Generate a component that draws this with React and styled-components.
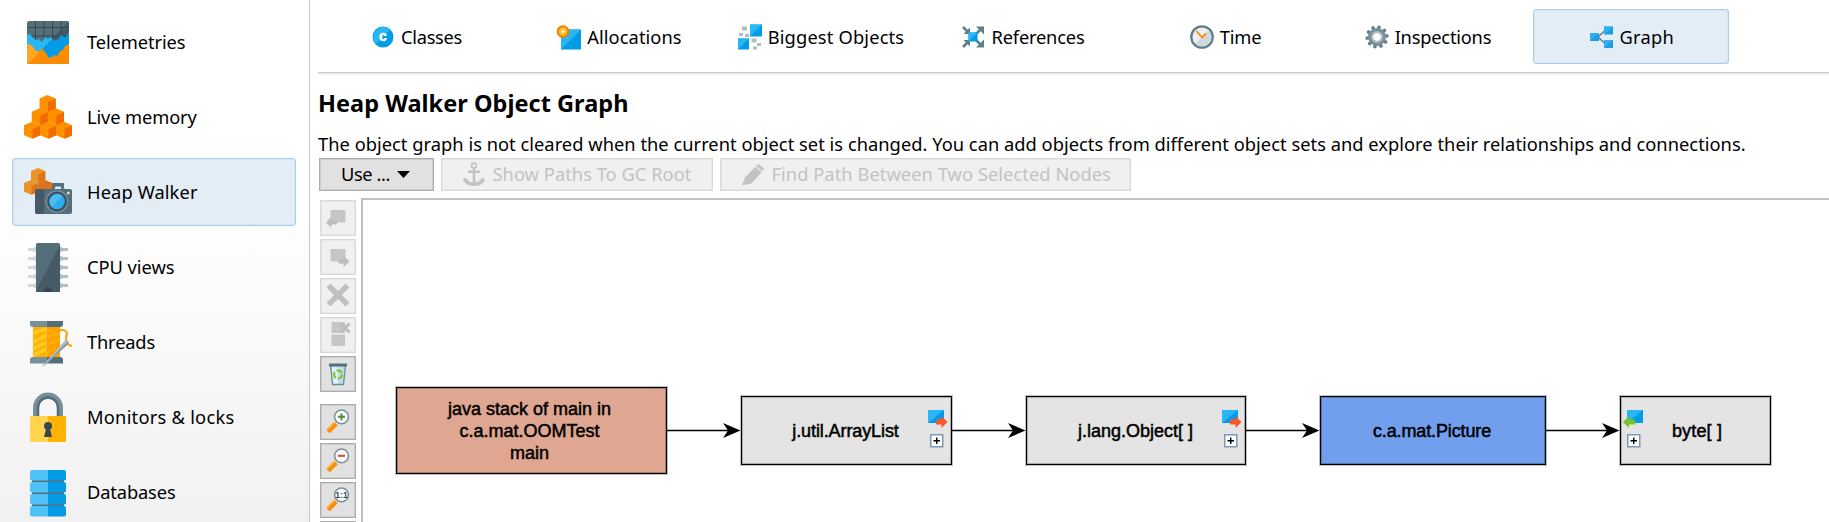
import React from "react";
import styled, { createGlobalStyle, css } from "styled-components";

const GlobalStyle = createGlobalStyle`
  * { box-sizing: border-box; }
  body {
    margin: 0;
    background: #fff;
    color: #000;
    font-family: "Noto Sans", "Open Sans", sans-serif;
    font-size: 18.3px;
    line-height: 24px;
  }
`;

const Window = styled.div`
  display: flex;
  width: 100%;
  height: 522px;
  overflow: hidden;
`;

/* ---------- sidebar ---------- */

const Sidebar = styled.nav`
  flex: 0 0 310px;
  display: flex;
  flex-direction: column;
  gap: 7px;
  padding: 8px 13px 0 12px;
  border-right: 1px solid #c8c8c8;
  background: linear-gradient(#fff 0, #fff 200px, #f1f1f1 522px);
  overflow: hidden;
`;

const selectedBox = css`
  border-color: #a9cee6;
  background: #e3edf6;
  box-shadow: inset 0 0 0 1px #d6e6f2;
`;

const SidebarItem = styled.div`
  flex: 0 0 68px;
  display: flex;
  align-items: center;
  gap: 15px;
  padding-left: 11px;
  border: 1px solid transparent;
  border-radius: 3px;
  ${(p) => p.$selected && selectedBox}
`;

const Label = styled.span`
  white-space: pre;
  letter-spacing: ${(p) => p.$track || 0}px;
`;

/* ---------- main area ---------- */

const Main = styled.main`
  flex: 1;
  min-width: 0;
  display: flex;
  flex-direction: column;
  padding-left: 8px;
`;

const TabBar = styled.div`
  flex: 0 0 75px;
  display: flex;
  gap: 6.33px;
  padding: 9px 0 0 1px;
  border-bottom: 2px solid #f0f0f0;
  box-shadow: inset 0 -1px 0 #c8c8c8;
`;

const Tab = styled.div`
  flex: 0 0 196px;
  height: 55px;
  display: flex;
  align-items: center;
  padding-left: ${(p) => p.$inset}px;
  gap: ${(p) => p.$gap}px;
  border: 1px solid transparent;
  border-radius: 3px;
  ${(p) => p.$selected && selectedBox}
`;

const Title = styled.h1`
  margin: 12px 0 0;
  height: 32px;
  font-size: 23.5px;
  line-height: 32px;
  font-weight: 700;
  letter-spacing: 0.03px;
  white-space: nowrap;
`;

const Description = styled.p`
  margin: 12px 0 0;
  height: 27px;
  line-height: 26px;
  letter-spacing: 0.025px;
  white-space: nowrap;
`;

const ButtonRow = styled.div`
  display: flex;
  gap: 7px;
  padding-left: 1px;
  height: 33px;
`;

const buttonFace = css`
  border: 1px solid ${(p) => (p.$disabled ? "#d9d9d9" : "#adadad")};
  background: ${(p) => (p.$disabled ? "#f0f0f0" : "#e1e1e1")};
  box-shadow: inset 0 0 0 1px ${(p) => (p.$disabled ? "#e6e6e6" : "#cdcdcd")};
  color: ${(p) => (p.$disabled ? "#c3c3c3" : "#000")};
`;

const Button = styled.div`
  display: flex;
  align-items: center;
  width: ${(p) => p.$width}px;
  padding: 0 0 1px 21px;
  gap: ${(p) => p.$gap}px;
  ${buttonFace}
`;

const Workspace = styled.div`
  flex: 1;
  min-height: 0;
  display: flex;
  padding: 7px 0 0 1px;
`;

const ToolColumn = styled.div`
  flex: 0 0 42px;
  display: flex;
  flex-direction: column;
  gap: 3px;
  padding: 2px 0 0 0.5px;
  overflow: hidden;
`;

const ToolButton = styled.div`
  flex: 0 0 36px;
  width: 36px;
  display: flex;
  align-items: center;
  justify-content: center;
  margin-top: ${(p) => (p.$newGroup ? 9 : 0)}px;
  ${buttonFace}
`;

const Canvas = styled.div`
  flex: 1;
  position: relative;
  border: 2px solid #c0c0c0;
  border-width: 2px 0 0 2px;
  overflow: hidden;
`;

const Edges = styled.svg`
  position: absolute;
  inset: 0;
`;

const Node = styled.div`
  position: absolute;
  left: ${(p) => p.$x}px;
  top: ${(p) => p.$y}px;
  width: ${(p) => p.$w}px;
  height: ${(p) => p.$h}px;
  display: flex;
  align-items: center;
  justify-content: center;
  border: 1px solid #000;
  box-shadow: 0 0 0 1px rgba(0, 0, 0, 0.25), inset 0 0 0 1px rgba(0, 0, 0, 0.25);
  background: ${(p) => p.$fill};
  padding-left: ${(p) => p.$padLeft || 0}px;
  padding-right: ${(p) => p.$padRight || 0}px;
  font: 18px/22px "Liberation Sans", Arial, sans-serif;
  -webkit-text-stroke: 0.5px #000;
  letter-spacing: ${(p) => p.$track || 0}px;
  text-align: center;
  white-space: pre-line;
`;

const Handle = styled.svg`
  position: absolute;
  top: 13px;
  ${(p) => (p.$side === "left" ? "left: 2px;" : "right: 3px;")}
`;

/* ---------- sidebar icons ---------- */

const Icon48 = ({ children }) => (
  <svg width="48" height="50" viewBox="0 0 48 50">{children}</svg>
);

const TelemetriesIcon = () => (
  <Icon48>
    <clipPath id="tele"><rect x="3" y="4" width="42" height="43" rx="2" /></clipPath>
    <g clipPath="url(#tele)">
      <rect x="3" y="4" width="42" height="43" fill="#546e7a" />
      <path d="M45 4L3 47H45z" fill="#455a64" />
      <path d="M11.5 4v20M20 4v20M28.5 4v20M37 4v20M3 10.500H45M3 19H45" stroke="#37474f" strokeWidth="1" />
      <path d="M3 18L6 17L9 21L12 23L15 22L18 25L21 20L24 22L27 20L30 24L34 23L37 18L41 21L45 16V47H3z" fill="#29b6f6" />
      <path d="M45 16L41 21L37 18L34 23L30 24L28 22L10 40H45z" fill="#039be5" />
      <path d="M3 28L5 27L8 29L11 33L15 35L18 31L20 34L22 36L24 40L27 41L30 38L33 39L36 34L39 33L41 29L45 27V47H3z" fill="#fb8c00" />
      <path d="M3 28L5 27L8 29L11 33L15 35L16 34L4 47H3z" fill="#ffa726" />
    </g>
  </Icon48>
);

const Cube = ({ x, y, light = "#ff9100", dark = "#ef6c00" }) => (
  <g transform={`translate(${x} ${y})`}>
    <path d="M8 0L16.200 3.500V13.500L8.500 17L0 13.500V3.500z" fill={light} />
    <path d="M16.200 3.800V13.500L8.500 17V7.200z" fill={dark} />
  </g>
);

const LiveMemoryIcon = () => (
  <Icon48>
    {[[0, 29.8], [16, 29.8], [32, 29.8], [7.800, 16.300], [23.800, 16.300], [15.500, 3]].map(([x, y]) => (
      <Cube key={`${x}-${y}`} x={x} y={y} />
    ))}
  </Icon48>
);

const HeapWalkerIcon = () => (
  <Icon48>
    <g transform="translate(0 1) scale(.88)">
      <Cube x={0} y={13.500} light="#ec9326" dark="#d87320" />
      <Cube x={16} y={13.500} light="#d87320" dark="#d87320" />
      <Cube x={8} y={0} light="#ec9326" dark="#d87320" />
    </g>
    <path d="M29 22L30.500 17.500H37.500L39 22" fill="none" stroke="#546e7a" strokeWidth="3" strokeLinejoin="round" />
    <rect x="28" y="16" width="12" height="3.500" rx="1" fill="#546e7a" />
    <rect x="11" y="22" width="37" height="25" rx="2" fill="#546e7a" />
    <path d="M13 22H20V47H13a2 2 0 0 1-2-2V24a2 2 0 0 1 2-2z" fill="#455a64" />
    <circle cx="33" cy="34.500" r="11.300" fill="#78909c" />
    <circle cx="33" cy="34.500" r="10" fill="#37505c" />
    <circle cx="33" cy="34.500" r="7.800" fill="#29aeee" />
    <path d="M27.500 40A7.800 7.800 0 0 1 38.500 29z" fill="#50baf0" />
    <circle cx="44.300" cy="26" r="1.600" fill="#cfd8dc" />
  </Icon48>
);

const CpuIcon = () => (
  <Icon48>
    {[7.500, 16.500, 25.500, 34.500, 43.500].map((y) => (
      <g key={y}>
        <path d={`M12 ${y - 3}L9 ${y - 1.500}H4V${y + 1.500}H9L12 ${y + 3}z`} fill="#cfd8dc" />
        <path d={`M36 ${y - 3}L39 ${y - 1.500}H44V${y + 1.500}H39L36 ${y + 3}z`} fill="#b0bec5" />
      </g>
    ))}
    <rect x="12" y="1" width="24" height="49" rx="1.500" fill="#546e7a" />
    <path d="M36 3L12 48.500Q12 50 13.500 50H34.500Q36 50 36 48.500z" fill="#455a64" />
    <path d="M19.500 50a4.500 4.500 0 0 1 9 0z" fill="#37474f" />
  </Icon48>
);

const ThreadsIcon = () => (
  <Icon48>
    <path d="M9 9H22.500V41H9z" fill="#ffb300" />
    <path d="M22.500 9H36V41H22.500z" fill="#ffa000" />
    <path d="M9 16L22.500 12M9 25L22.500 18.500M9 32L22.500 25M9 38.500L22.500 32" stroke="#ffca28" strokeWidth="3.200" />
    <path d="M22.500 12L36 18M22.500 20L36 17M22.500 28L36 23M22.500 36L32 31" stroke="#ffb300" strokeWidth="1.800" />
    <path d="M6 4H22.500V10H9Q6 10 6 7z" fill="#78909c" />
    <path d="M22.500 4H39V7Q39 10 36 10H22.500z" fill="#546e7a" />
    <path d="M22.500 40H9Q6 40 6 43V46.500H22.500z" fill="#78909c" />
    <path d="M22.500 40H36Q39 40 39 43V46.500H22.500z" fill="#546e7a" />
    <path d="M36 13Q43 12.500 43 17Q41 23 43 26Q44 28 48 29" fill="none" stroke="#ffa000" strokeWidth="2" />
    <path d="M18 49.500L41 23.500Q44 22 44.500 24.500Q44.500 26.500 43 28L20 49z" fill="#b0bec5" />
    <path d="M18.500 49.500L43 28Q44.500 26 44.500 24z" fill="#78909c" />
  </Icon48>
);

const LockIcon = () => (
  <Icon48>
    <path d="M12 24V15.500a12 12 0 0 1 24 0V24" fill="none" stroke="#78909c" strokeWidth="6" />
    <path d="M14 24V15.500a10 10 0 0 1 20 0V24" fill="none" stroke="#546e7a" strokeWidth="2.500" />
    <path d="M6 24H24V50H7.500Q6 50 6 48.500z" fill="#ffd54f" />
    <path d="M24 24H42V48.500Q42 50 40.500 50H24z" fill="#ffb300" />
    <circle cx="24" cy="34" r="4" fill="#37474f" />
    <path d="M22.500 35H25.500L28 45H20z" fill="#37474f" />
  </Icon48>
);

const DatabaseIcon = () => (
  <Icon48>
    <path d="M8 10H40V44H8z" fill="#546e7a" />
    {[3, 15, 27, 39].map((y) => (
      <g key={y}>
        <path d={`M24 ${y}H8a2 2 0 0 0-2 2v6a2 2 0 0 0 2 2.500H24z`} fill="#4fc3f7" />
        <path d={`M24 ${y}H40a2 2 0 0 1 2 2v6a2 2 0 0 1-2 2.500H24z`} fill="#039be5" />
      </g>
    ))}
  </Icon48>
);

/* ---------- tab icons, on a 26px grid ---------- */

const Icon26 = ({ children }) => (
  <svg width="26" height="26" viewBox="0 0 26 26">{children}</svg>
);

const ClassIcon = () => (
  <Icon26>
    <circle cx="13" cy="13" r="10.500" fill="#039be5" />
    <path d="M5.600 20.400A10.500 10.500 0 0 1 20.400 5.600z" fill="#29b6f6" />
    <text x="13" y="17" textAnchor="middle" fontFamily="Liberation Sans" fontWeight="700" fontSize="14" fill="#fff" stroke="#fff" strokeWidth=".5">c</text>
  </Icon26>
);

const AllocationsIcon = () => (
  <Icon26>
    <rect x="5" y="5.500" width="20" height="20" fill="#039be5" />
    <path d="M5 5.500H25L5 25.500z" fill="#29b6f6" />
    <circle cx="7" cy="7.500" r="6.300" fill="#f57c00" />
    <circle cx="7" cy="7.500" r="4.300" fill="#ffc02e" />
    <circle cx="7" cy="7.500" r="1.600" fill="#fff3cf" />
  </Icon26>
);

const BiggestIcon = () => (
  <Icon26>
    <rect x="13" y="0.500" width="12" height="12" fill="#039be5" />
    <path d="M13 .5H25L13 12.500z" fill="#29b6f6" />
    <rect x="1" y="14.500" width="11" height="11" fill="#039be5" />
    <path d="M1 14.500H12L1 25.500z" fill="#29b6f6" />
    <path d="M5 2.500h5v4H5zM2 9h4v3H2zM8 10h4v3H8zM14.500 14.500h5v4h-5zM20 19h4v3h-4zM16 22.500h4v3h-4z" fill="#b0bec5" />
  </Icon26>
);

const ReferencesIcon = () => (
  <Icon26>
    <g stroke="#607d8b" strokeWidth="2.600" fill="none">
      <path d="M3 3L9 9M16 10L22 4M3 23L9 17M16 16L22 22" />
    </g>
    <path d="M10 3.500V10H3.500zM16 2.500H24V10.500zM3.500 16H10V22.500zM24 15.500V23.500H16z" fill="#607d8b" />
    <rect x="8.500" y="8.500" width="9" height="9" fill="#039be5" />
    <path d="M8.500 8.500H17.500L8.500 17.500z" fill="#29b6f6" />
  </Icon26>
);

const TimeIcon = () => (
  <Icon26>
    <circle cx="13" cy="13" r="10.700" fill="#eceff1" stroke="#607d8b" strokeWidth="2.300" />
    <path d="M6.300 19.700A9.500 9.500 0 0 0 19.700 6.300z" fill="#cfd8dc" />
    <path d="M7.500 7L13 13.500L17 9.500" fill="none" stroke="#fb8c00" strokeWidth="1.800" />
  </Icon26>
);

const GearIcon = () => (
  <Icon26>
    {[0, 36, 72, 108, 144, 180, 216, 252, 288, 324].map((a) => (
      <rect key={a} x="11.300" y="1.500" width="3.400" height="6" rx="1" fill="#607d8b" transform={`rotate(${a + 12} 13 13)`} />
    ))}
    <circle cx="13" cy="13" r="6.500" fill="none" stroke="#78909c" strokeWidth="5" />
    <circle cx="13" cy="13" r="5" fill="none" stroke="#b0bec5" strokeWidth="1.800" />
  </Icon26>
);

const GraphIcon = () => (
  <Icon26>
    <path d="M17 5.500L9 13L17 20.500" fill="none" stroke="#607d8b" strokeWidth="1.500" />
    <path d="M1 9h9v8H1zM15 2.500h9v8h-9zM15 16h9v8h-9z" fill="#1c9ee6" />
    <path d="M1 9h9L1 17zM15 2.500h9l-9 8zM15 16h9l-9 8z" fill="#32aff0" />
  </Icon26>
);

/* ---------- button icons ---------- */

const AnchorIcon = () => (
  <svg width="22" height="25" viewBox="0 0 22 25" fill="none" stroke="#c3c3c3">
    <circle cx="11" cy="3.500" r="2.400" strokeWidth="1.600" />
    <path d="M11 6V21M5 9.700H17" strokeWidth="2.600" />
    <path d="M2.500 18.500Q5 22.300 11 22.300Q17 22.300 19.500 18.500" strokeWidth="3.400" />
    <path d="M0 20L1 15.500L6 18zM22 20L21 15.500L16 18z" fill="#c3c3c3" stroke="none" />
  </svg>
);

const PencilIcon = () => (
  <svg width="22" height="23" viewBox="0 0 22 23" fill="#c3c3c3">
    <path d="M16.500 1L22 5.500L20.300 8.300L14 3z" />
    <path d="M13.300 3.800L19.700 9.200L9.500 20.500L0 22.500L3 14.500z" />
  </svg>
);

const CaretIcon = () => (
  <svg width="13" height="7" viewBox="0 0 13 7"><path d="M0 0H13L6.500 7z" fill="#000" /></svg>
);

const IncomingIcon = () => (
  <Icon26>
    <path d="M5.500 5H20.500V17.500H5.500z" fill="#c6c6c6" />
    <path d="M1 17.500L6.500 11.500V15.500H12V19.500H6.500V23z" fill="#bdbdbd" />
  </Icon26>
);
const OutgoingIcon = () => (
  <Icon26>
    <path d="M5.500 5H20.500V17.500H5.500z" fill="#c6c6c6" />
    <path d="M24.500 17.500L18.500 11.500V15.500H13.500V19.500H18.500V23z" fill="#bdbdbd" />
  </Icon26>
);
const DeleteIcon = () => (
  <Icon26><path d="M3.500 2.500L22.500 21.500M22.500 2.500L3.500 21.500" stroke="#c0c0c0" strokeWidth="5.500" /></Icon26>
);
const DeleteOthersIcon = () => (
  <Icon26>
    <path d="M6.500 0H20V11H6.500zM6.500 12.500H20V24H6.500z" fill="#c6c6c6" />
    <path d="M15.500 1.500L24.500 10.500M24.500 1.500L15.500 10.500" stroke="#bcbcbc" strokeWidth="3" />
  </Icon26>
);
const BinIcon = () => (
  <Icon26>
    <path d="M5.500 4H20.500L18.500 23.500H7.500z" fill="#c3dbe8" stroke="#6f8c9b" strokeWidth="1.300" />
    <path d="M7 6H13V22.500H8.500z" fill="#e2eff6" />
    <path d="M4 2.500H22V5.500H4z" fill="#546e7a" />
    <circle cx="13" cy="13.500" r="4" fill="none" stroke="#76c622" strokeWidth="2" strokeDasharray="6.400 2" />
  </Icon26>
);
const Magnifier = ({ children }) => (
  <Icon26>
    <path d="M3 22.500L11 14.500" stroke="#fb8c00" strokeWidth="5" />
    <path d="M2.200 20.800L10 13" stroke="#ffb74d" strokeWidth="1.500" />
    <circle cx="16.500" cy="7.800" r="6.900" fill="#fafdff" stroke="#78909c" strokeWidth="1.500" />
    {children}
  </Icon26>
);
const ZoomInIcon = () => (
  <Magnifier><path d="M13 7.800H20M16.500 4.500V11.300" stroke="#558b2f" strokeWidth="2" /></Magnifier>
);
const ZoomOutIcon = () => (
  <Magnifier><path d="M13 7.800H20" stroke="#e0533a" strokeWidth="2.200" /></Magnifier>
);
const ZoomResetIcon = () => (
  <Magnifier>
    <text x="16.500" y="10.900" textAnchor="middle" fontFamily="Liberation Sans" fontWeight="700" fontSize="8.500" fill="#37474f">1:1</text>
  </Magnifier>
);

/* ---------- node handles ---------- */

const ReferenceHandle = ({ side }) => (
  <Handle $side={side} width="20" height="40" viewBox="0 0 20 40">
    {side === "left" ? (
      <>
        <rect x="4" y="0" width="16" height="13" fill="#039be5" />
        <path d="M4 0H20L4 13z" fill="#29b6f6" />
        <path d="M0 12L6 6V9.500H12V14.500H6V18z" fill="#76c622" />
      </>
    ) : (
      <>
        <rect x="0" y="0" width="16" height="13" fill="#039be5" />
        <path d="M0 0H16L0 13z" fill="#29b6f6" />
        <path d="M19.500 12L13.500 6V9.500H8V14.500H13.500V18z" fill="#f9572a" />
      </>
    )}
    <g transform={side === "left" ? "translate(4 24)" : "translate(2 24)"}>
      <rect x="0.750" y="0.750" width="12" height="12" fill="#fff" stroke="#7b9ab8" strokeWidth="1.500" />
      <path d="M3.500 6.750H10M6.750 3.500V10" stroke="#000" strokeWidth="1.400" />
    </g>
  </Handle>
);

const SIDEBAR = [
  { label: "Telemetries", Icon: TelemetriesIcon, track: -0.1 },
  { label: "Live memory", Icon: LiveMemoryIcon, track: -0.12 },
  { label: "Heap Walker", Icon: HeapWalkerIcon, track: 0.11, selected: true },
  { label: "CPU views", Icon: CpuIcon, track: -0.04 },
  { label: "Threads", Icon: ThreadsIcon, track: -0.17 },
  { label: "Monitors & locks", Icon: LockIcon, track: 0.24 },
  { label: "Databases", Icon: DatabaseIcon, track: -0.14 },
];

const TABS = [
  { label: "Classes", Icon: ClassIcon, inset: 49.5, gap: 5.5, track: -0.3 },
  { label: "Allocations", Icon: AllocationsIcon, inset: 34, gap: 5, track: 0.06 },
  { label: "Biggest Objects", Icon: BiggestIcon, inset: 12, gap: 5, track: 0.16 },
  { label: "References", Icon: ReferencesIcon, inset: 33.500, gap: 5, track: -0.19 },
  { label: "Time", Icon: TimeIcon, inset: 59.500, gap: 5, track: -0.17 },
  { label: "Inspections", Icon: GearIcon, inset: 32.500, gap: 4.5, track: -0.22 },
  { label: "Graph", Icon: GraphIcon, inset: 55, gap: 4.5, track: 0.24, selected: true },
];

const TOOLS = [
  { Icon: IncomingIcon, disabled: true },
  { Icon: OutgoingIcon, disabled: true },
  { Icon: DeleteIcon, disabled: true },
  { Icon: DeleteOthersIcon, disabled: true },
  { Icon: BinIcon },
  { Icon: ZoomInIcon, newGroup: true },
  { Icon: ZoomOutIcon },
  { Icon: ZoomResetIcon },
  { Icon: Magnifier },
];

/* Node coordinates are relative to the inside of the canvas border. */
const NODES = [
  { label: "java stack of main in\nc.a.mat.OOMTest\nmain", x: 33, y: 187, w: 271, h: 87, fill: "#dfa692", padRight: 4 },
  { label: "j.util.ArrayList", x: 378, y: 196, w: 211, h: 69, fill: "#e4e4e4", handle: "right", padRight: 2, track: -0.1 },
  { label: "j.lang.Object[ ]", x: 663, y: 196, w: 220, h: 69, fill: "#e4e4e4", handle: "right", padRight: 1 },
  { label: "c.a.mat.Picture", x: 957, y: 196, w: 226, h: 69, fill: "#719fee", padRight: 2, track: -0.12 },
  { label: "byte[ ]", x: 1257, y: 196, w: 151, h: 69, fill: "#e4e4e4", handle: "left", padLeft: 3, track: 0.16 },
];

export default function App() {
  return (
    <Window>
      <GlobalStyle />
      <Sidebar>
        {SIDEBAR.map(({ label, Icon, track, selected }) => (
          <SidebarItem key={label} $selected={selected}>
            <Icon />
            <Label $track={track}>{label}</Label>
          </SidebarItem>
        ))}
      </Sidebar>
      <Main>
        <TabBar>
          {TABS.map(({ label, Icon, inset, gap, track, selected }) => (
            <Tab key={label} $inset={inset} $gap={gap} $selected={selected}>
              <Icon />
              <Label $track={track}>{label}</Label>
            </Tab>
          ))}
        </TabBar>
        <Title>Heap Walker Object Graph</Title>
        <Description>
          The object graph is not cleared when the current object set is changed. You can add objects from different object sets and explore their relationships and connections.
        </Description>
        <ButtonRow>
          <Button $width={115} $gap={7.5}>
            <Label $track={-0.42}>Use ...</Label>
            <CaretIcon />
          </Button>
          <Button $width={272} $gap={7.5} $disabled>
            <AnchorIcon />
            <Label $track={0.03}>Show Paths To GC Root</Label>
          </Button>
          <Button $width={411} $gap={7.5} $disabled>
            <PencilIcon />
            <Label $track={0.05}>Find Path Between Two Selected Nodes</Label>
          </Button>
        </ButtonRow>
        <Workspace>
          <ToolColumn>
            {TOOLS.map(({ Icon, disabled, newGroup }, i) => (
              <ToolButton key={i} $disabled={disabled} $newGroup={newGroup}>
                <Icon />
              </ToolButton>
            ))}
          </ToolColumn>
          <Canvas>
            <Edges width="1466" height="322">
              {NODES.slice(1).map((node, i) => {
                const from = NODES[i].x + NODES[i].w;
                return (
                  <g key={node.label}>
                    <path d={`M${from} 230.500H${node.x - 10}`} stroke="#000" strokeWidth="1.600" />
                    <path d={`M${node.x - 0.500} 230.500L${node.x - 18} 223L${node.x - 13} 230.500L${node.x - 18} 238z`} />
                  </g>
                );
              })}
            </Edges>
            {NODES.map((n) => (
              <Node
                key={n.label}
                $x={n.x}
                $y={n.y}
                $w={n.w}
                $h={n.h}
                $fill={n.fill}
                $padLeft={n.padLeft}
                $padRight={n.padRight}
                $track={n.track}
              >
                {n.label}
                {n.handle && <ReferenceHandle side={n.handle} />}
              </Node>
            ))}
          </Canvas>
        </Workspace>
      </Main>
    </Window>
  );
}
